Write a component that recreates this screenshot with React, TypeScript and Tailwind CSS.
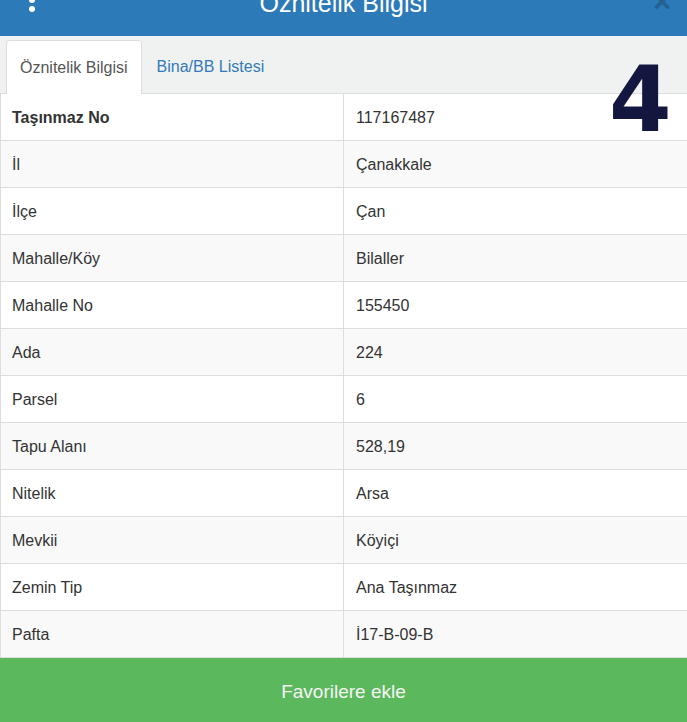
import React from "react";

const ROWS: { label: string; value: string; bold?: boolean }[] = [
  { label: "Taşınmaz No", value: "117167487", bold: true },
  { label: "İl", value: "Çanakkale" },
  { label: "İlçe", value: "Çan" },
  { label: "Mahalle/Köy", value: "Bilaller" },
  { label: "Mahalle No", value: "155450" },
  { label: "Ada", value: "224" },
  { label: "Parsel", value: "6" },
  { label: "Tapu Alanı", value: "528,19" },
  { label: "Nitelik", value: "Arsa" },
  { label: "Mevkii", value: "Köyiçi" },
  { label: "Zemin Tip", value: "Ana Taşınmaz" },
  { label: "Pafta", value: "İ17-B-09-B" },
];

export default function App() {
  return (
    <div className="relative w-[687px] h-[722px] overflow-hidden bg-white font-['Liberation_Sans',Arial,sans-serif] text-[#333]">
      {/* Modal header */}
      <div className="relative h-[36px] bg-[#2d7ab8] flex justify-center items-start overflow-hidden">
        <div className="absolute left-[29px] top-[-12px] flex flex-col gap-[3px]">
          <span className="block w-[6px] h-[6px] rounded-full bg-white" />
          <span className="block w-[6px] h-[6px] rounded-full bg-white" />
          <span className="block w-[6px] h-[6px] rounded-full bg-white" />
        </div>
        <h4 className="mt-[-9px] text-[25px] leading-none text-white">Öznitelik Bilgisi</h4>
        <button className="absolute right-[16px] top-[-14px] text-[31px] font-bold leading-none text-black opacity-20">
          ×
        </button>
      </div>

      {/* Tabs */}
      <div className="h-[58px] bg-[#f0f2f2] border-b border-[#ddd] flex items-end pl-[6px]">
        <div className="h-[54px] -mb-px px-[13px] pt-[1px] bg-white border border-b-0 border-[#ddd] rounded-t-[4px] flex items-center text-[16px] text-[#555]">
          Öznitelik Bilgisi
        </div>
        <div className="h-[54px] px-[15px] pt-[1px] flex items-center text-[16px] text-[#337ab7]">
          Bina/BB Listesi
        </div>
      </div>

      {/* Attribute table */}
      <div className="border-l border-[#ddd]">
        {ROWS.map((r, i) => (
          <div
            key={r.label}
            className={`flex h-[47px] border-b border-[#ddd] text-[16px] ${i % 2 === 1 ? "bg-[#f9f9f9]" : "bg-white"}`}
          >
            <div className={`w-[343px] border-r border-[#ddd] flex items-center pl-[11px] pt-[1px] ${r.bold ? "font-bold" : ""}`}>
              {r.label}
            </div>
            <div className="flex-1 flex items-center pl-[12px] pt-[1px]">{r.value}</div>
          </div>
        ))}
      </div>

      <button className="w-full h-[66px] bg-[#5cb85c] text-[19px] text-[#f5f5f5] flex items-center justify-center pt-[2px]">
        Favorilere ekle
      </button>

      <span className="absolute left-[609px] top-[55px] text-[90px] leading-none font-bold text-[#13163f] font-['DejaVu_Sans',sans-serif]">
        4
      </span>
    </div>
  );
}
